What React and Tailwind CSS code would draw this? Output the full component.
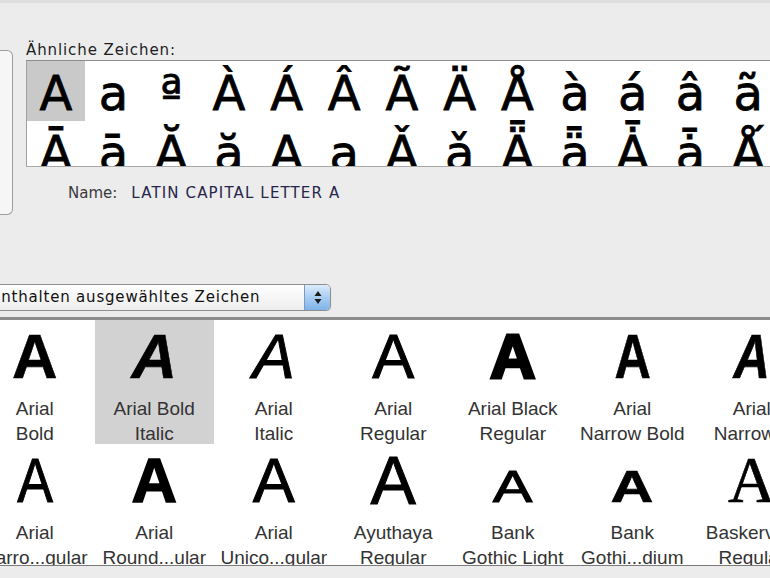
import React from 'react';

const similarTop = ['A', 'a', 'ª', 'À', 'Á', 'Â', 'Ã', 'Ä', 'Å', 'à', 'á', 'â', 'ã'];
const similarBottom = ['Ā', 'ā', 'Ă', 'ă', 'Ą', 'ą', 'Ǎ', 'ǎ', 'Ǟ', 'ǟ', 'Ǡ', 'ǡ', 'Ǻ'];

const fontRows = [
  [
    { lines: ['Arial', 'Bold'], glyph: 'font-bold [-webkit-text-stroke:0.6px_black]' },
    { lines: ['Arial Bold', 'Italic'], glyph: 'font-bold italic [-webkit-text-stroke:0.6px_black]', selected: true },
    { lines: ['Arial', 'Italic'], glyph: 'italic [-webkit-text-stroke:1px_black]' },
    { lines: ['Arial', 'Regular'], glyph: '[-webkit-text-stroke:1px_black]' },
    { lines: ['Arial Black', 'Regular'], glyph: 'font-bold [-webkit-text-stroke:3px_black]' },
    { lines: ['Arial', 'Narrow Bold'], glyph: 'font-bold inline-block scale-x-[0.8] [-webkit-text-stroke:0.6px_black]' },
    { lines: ['Arial', 'Narrow...'], glyph: 'font-bold italic inline-block scale-x-[0.8] [-webkit-text-stroke:0.6px_black]' },
  ],
  [
    { lines: ['Arial', 'Narro...gular'], glyph: 'inline-block scale-x-[0.85] [-webkit-text-stroke:1px_black]' },
    { lines: ['Arial', 'Round...ular'], glyph: 'font-bold [-webkit-text-stroke:1.5px_black]' },
    { lines: ['Arial', 'Unico...gular'], glyph: '[-webkit-text-stroke:1px_black]' },
    { lines: ['Ayuthaya', 'Regular'], glyph: 'text-[68px] [-webkit-text-stroke:1px_black]' },
    { lines: ['Bank', 'Gothic Light'], glyph: 'text-[44px] inline-block scale-x-[1.35] [-webkit-text-stroke:1px_black]' },
    { lines: ['Bank', 'Gothi...dium'], glyph: 'text-[44px] font-bold inline-block scale-x-[1.35] [-webkit-text-stroke:0.6px_black]' },
    { lines: ['Baskerville', 'Regular'], glyph: "text-[66px] font-['Liberation_Serif',serif] [-webkit-text-stroke:0.6px_black]" },
  ],
];

function SimilarRow({ chars, first }) {
  return (
    <div className="flex h-[60px]">
      {chars.map((c, i) => (
        <div
          key={i}
          className={`w-[57.7px] shrink-0 h-[60px] text-center leading-[64px] ${first && i === 0 ? 'bg-[#c9c9c9]' : ''}`}
        >
          {c}
        </div>
      ))}
    </div>
  );
}

function FontCell({ cell }) {
  return (
    <div className={`w-[119.5px] shrink-0 h-[124px] flex flex-col items-center ${cell.selected ? 'bg-[#d2d2d2]' : ''}`}>
      <div className="h-[72px] leading-[72px] text-[63px] text-black font-['Liberation_Sans',sans-serif]">
        <span className={cell.glyph}>A</span>
      </div>
      <div className="mt-[4px] text-[19px] leading-[25px] text-[#333] text-center whitespace-nowrap font-['Liberation_Sans',sans-serif]">
        <div>{cell.lines[0]}</div>
        <div>{cell.lines[1]}</div>
      </div>
    </div>
  );
}

export default function App() {
  return (
    <div className="w-[770px] h-[578px] bg-[#ececec] overflow-hidden flex flex-col font-['DejaVu_Sans',sans-serif]">
      <div className="h-[3px] shrink-0 bg-[#dedede]" />

      {/* top area: character preview box + similar characters */}
      <div className="flex h-[281px] shrink-0">
        <div className="w-[13px] shrink-0 pt-[47px]">
          <div className="h-[165px] border border-l-0 border-[#9d9d9d] rounded-r-[6px] bg-[#f6f6f6]" />
        </div>
        <div className="flex-1 min-w-0 pl-[13px] pt-[38px]">
          <div className="h-[19px] text-[15px] leading-[18px] tracking-[0.9px] text-[#1e1e1e] whitespace-nowrap">
            Ähnliche Zeichen:
          </div>
          <div className="h-[107px] border-y border-l border-t-[#8c8c8c] border-b-[#a8a8a8] border-l-[#a0a0a0] bg-white overflow-hidden">
            <div className="text-[48px] text-black [-webkit-text-stroke:0.8px_black]">
              <SimilarRow chars={similarTop} first />
              <SimilarRow chars={similarBottom} />
            </div>
          </div>
          <div className="pl-[42px] pt-[17px] text-[15px] leading-[18px] whitespace-nowrap">
            <span className="text-[#3a3a3a]">Name:</span>
            <span className="ml-[14px] tracking-[1.15px] text-[#26264a]">LATIN CAPITAL LETTER A</span>
          </div>
        </div>
      </div>

      {/* popup */}
      <div className="h-[27px] shrink-0 overflow-hidden">
        <div className="-ml-[18px] w-[349px] h-[27px] flex border border-[#8f8f8f] rounded-r-[5px] bg-gradient-to-b from-white to-[#ededed] shadow-[0_1px_1px_rgba(0,0,0,0.15)]">
          <div className="flex-1 pl-[8px] text-[15px] leading-[25px] tracking-[0.8px] text-[#111] whitespace-nowrap">
            Enthalten ausgewähltes Zeichen
          </div>
          <div className="w-[26px] h-[25px] rounded-r-[4px] border-l border-[#7a9cc4] bg-gradient-to-b from-[#dcebfa] via-[#a9cdf2] to-[#7fb3e8] flex items-center justify-center">
            <svg width="8" height="15" viewBox="0 0 8 15">
              <path d="M4 1 L7.5 6 L0.5 6 Z" fill="#1b1b1b" />
              <path d="M4 14 L7.5 9 L0.5 9 Z" fill="#1b1b1b" />
            </svg>
          </div>
        </div>
      </div>

      <div className="h-[6px] shrink-0" />
      <div className="h-[3px] shrink-0 bg-[#8c8c8c]" />

      {/* font grid */}
      <div className="h-[245px] shrink-0 bg-white overflow-hidden">
        {fontRows.map((row, r) => (
          <div key={r} className="flex -ml-[25px]">
            {row.map((cell, i) => (
              <FontCell key={i} cell={cell} />
            ))}
          </div>
        ))}
      </div>

      <div className="flex-1 border-t border-[#7b7b7b] bg-[#ececec]" />
    </div>
  );
}
